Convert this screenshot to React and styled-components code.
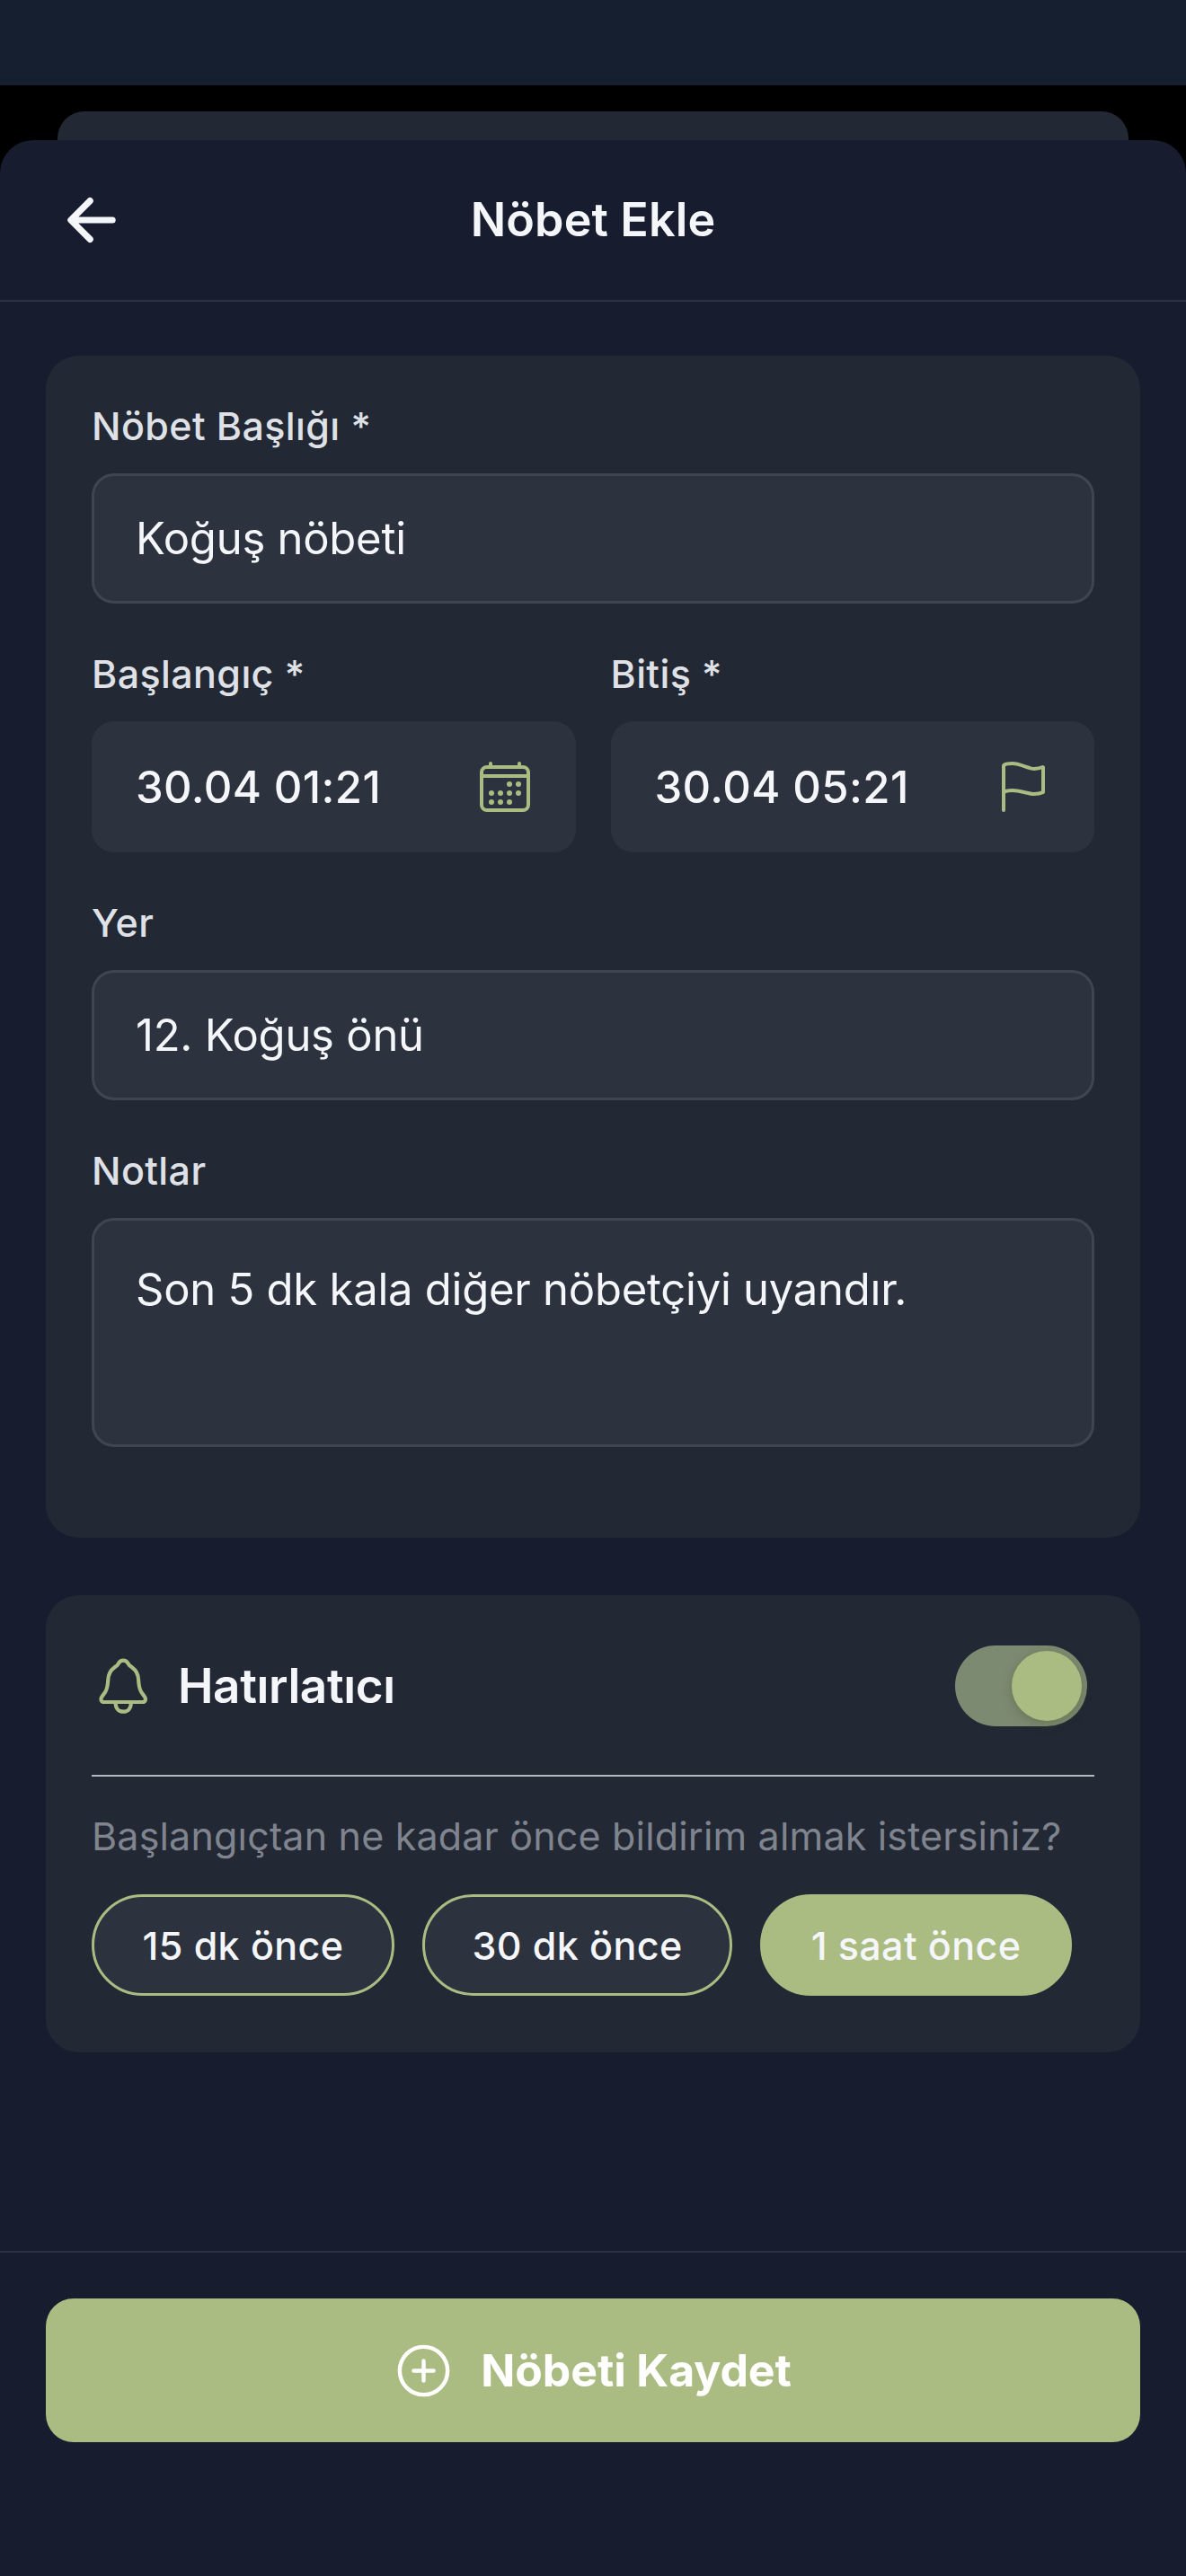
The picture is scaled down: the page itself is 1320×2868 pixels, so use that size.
import { useState } from "react";
import {
  IoAddCircleOutline,
  IoArrowBack,
  IoCalendarOutline,
  IoFlagOutline,
} from "react-icons/io5";
import styled, { createGlobalStyle, css } from "styled-components";

const GlobalStyles = createGlobalStyle`
  :root {
    --color-bg: #171d2e;
    --color-status: #161f30;
    --color-card: #222834;
    --color-field: #2c323e;
    --color-border: #404651;
    --color-line: #2c3243;
    --color-accent: #aabc82;
    --color-text: #f5f6fa;
    --color-label: #dfe1e6;
    --color-muted: #7f848e;

    --radius-card: 37px;
    --radius-field: 25px;
  }

  * {
    box-sizing: border-box;
    margin: 0;
    padding: 0;
  }

  body {
    background-color: #000;
    color: var(--color-text);
    font-family: Inter, "Liberation Sans", sans-serif;
  }

  button,
  input,
  textarea {
    font: inherit;
    color: inherit;
    border: none;
    background: none;
    outline: none;
  }
`;

const Screen = styled.div`
  width: 1320px;
  height: 2868px;
  display: flex;
  flex-direction: column;
  overflow: hidden;
  background-color: #000;
`;

const StatusBar = styled.div`
  height: 95px;
  flex-shrink: 0;
  background-color: var(--color-status);
`;

const PreviousSheet = styled.div`
  height: 32px;
  flex-shrink: 0;
  margin: 29px 64px 0;
  border-radius: 30px 30px 0 0;
  background-color: var(--color-card);
`;

const Sheet = styled.main`
  flex: 1;
  display: flex;
  flex-direction: column;
  border-radius: 37px 37px 0 0;
  background-color: var(--color-bg);
`;

const Header = styled.header`
  height: 180px;
  display: grid;
  grid-template-columns: 76px 1fr 76px;
  align-items: center;
  padding: 0 64px;
  border-bottom: 2px solid var(--color-line);
`;

const BackButton = styled.button`
  display: flex;
  font-size: 76px;
`;

const Title = styled.h1`
  font-size: 52px;
  font-weight: 600;
  line-height: 64px;
  text-align: center;
  letter-spacing: 0.15px;
`;

const Content = styled.div`
  flex: 1;
  display: flex;
  flex-direction: column;
  gap: 64px;
  padding: 60px 51px 0;
`;

const Card = styled.section`
  padding: 51px;
  border-radius: var(--radius-card);
  background-color: var(--color-card);
`;

const FormCard = styled(Card)`
  height: 1316px;
  display: flex;
  flex-direction: column;
  gap: 51px;
`;

const Field = styled.label`
  flex: 1;
  display: flex;
  flex-direction: column;
`;

const StackedField = styled(Field)`
  flex: none;
`;

const FieldRow = styled.div`
  display: flex;
  gap: 39px;
`;

const Label = styled.span`
  height: 80px;
  font-size: 43px;
  font-weight: 500;
  line-height: 54px;
  letter-spacing: 0.4px;
  color: var(--color-label);
`;

const fieldBox = css`
  width: 100%;
  border-radius: var(--radius-field);
  background-color: var(--color-field);
  font-size: 49px;
  letter-spacing: -0.25px;
`;

const Input = styled.input`
  ${fieldBox}
  height: 145px;
  padding: 0 46px;
  border: 3px solid var(--color-border);
`;

const TextArea = styled.textarea`
  ${fieldBox}
  height: 255px;
  padding: 46px;
  border: 3px solid var(--color-border);
  line-height: 62px;
  resize: none;
`;

const DateButton = styled.span`
  ${fieldBox}
  height: 146px;
  display: flex;
  align-items: center;
  justify-content: space-between;
  padding: 0 47px 0 49px;
  font-weight: 500;
  letter-spacing: 0.4px;

  & svg {
    font-size: 64px;
    color: var(--color-accent);
  }
`;

const ReminderCard = styled(Card)`
  height: 509px;
  display: flex;
  flex-direction: column;
`;

const ReminderHeader = styled.div`
  height: 151px;
  display: flex;
  align-items: flex-start;
  padding: 5px 8px 0 0;
  border-bottom: 2px solid #b3b9c1;
`;

const ReminderTitle = styled.h2`
  flex: 1;
  display: flex;
  align-items: center;
  gap: 26px;
  height: 90px;
  font-size: 53px;
  font-weight: 600;
  letter-spacing: -0.4px;
`;

const Switch = styled.button`
  width: 147px;
  height: 90px;
  display: flex;
  align-items: center;
  justify-content: ${({ $on }) => ($on ? "flex-end" : "flex-start")};
  padding: 6px;
  border-radius: 45px;
  background-color: #7d8a72;
`;

const SwitchThumb = styled.span`
  width: 78px;
  height: 78px;
  border-radius: 50%;
  background-color: var(--color-accent);
  box-shadow: 0 3px 12px rgba(60, 80, 30, 0.35);
`;

const Hint = styled.p`
  margin-top: 39px;
  font-size: 43px;
  line-height: 54px;
  letter-spacing: 0.18px;
  color: var(--color-muted);
  white-space: nowrap;
`;

const Chips = styled.div`
  display: flex;
  gap: 31px;
  margin-top: 38px;
`;

const Chip = styled.button`
  width: ${({ $width }) => $width}px;
  height: 113px;
  border: 3px solid var(--color-accent);
  border-radius: 57px;
  background-color: ${({ $active }) =>
    $active ? "var(--color-accent)" : "var(--color-field)"};
  font-size: 43px;
  font-weight: 500;
  letter-spacing: 0.4px;
  white-space: nowrap;
`;

const Footer = styled.footer`
  height: 362px;
  padding: 51px 51px 0;
  border-top: 2px solid var(--color-line);
`;

const SaveButton = styled.button`
  width: 100%;
  height: 160px;
  display: flex;
  align-items: center;
  justify-content: center;
  gap: 28px;
  padding-right: 3px;
  border-radius: 31px;
  background-color: var(--color-accent);
  color: #fff;
  font-size: 50px;
  font-weight: 700;
  letter-spacing: -0.1px;

  & svg {
    font-size: 71px;
  }
`;

const StyledBell = styled.svg`
  width: 70px;
  height: 70px;
  fill: none;
  stroke: var(--color-accent);
  stroke-width: 4.2;
  stroke-linecap: round;
  stroke-linejoin: round;
`;

function BellIcon() {
  return (
    <StyledBell viewBox="0 0 70 70">
      <path d="M35.2 6.7C32 6.700 30.300 9 29.200 11C28.300 12.700 27 13.200 25.300 14.500C20.500 18 18.600 22.500 18.300 28C18 34 17.700 38 15 42L11.300 47.200C9.500 50.200 10.600 53 13.600 53H56.800C59.800 53 60.900 50.200 59.100 47.200L55.400 42C52.700 38 52.400 34 52.100 28C51.800 22.500 49.900 18 45.100 14.500C43.400 13.200 42.100 12.700 41.200 11C40.100 9 38.400 6.700 35.200 6.700Z" />
      <path d="M26.600 54C26.600 59.800 30 63.700 35.200 63.700C40.400 63.700 43.800 59.800 43.800 54" />
    </StyledBell>
  );
}

const reminders = [
  { id: "15m", label: "15 dk önce", width: 337 },
  { id: "30m", label: "30 dk önce", width: 345 },
  { id: "1h", label: "1 saat önce", width: 347 },
];

export default function App() {
  const [reminderOn, setReminderOn] = useState(true);
  const [selected, setSelected] = useState("1h");

  return (
    <>
      <GlobalStyles />
      <Screen>
        <StatusBar />
        <PreviousSheet />
        <Sheet>
          <Header>
            <BackButton type="button">
              <IoArrowBack />
            </BackButton>
            <Title>Nöbet Ekle</Title>
          </Header>

          <Content>
            <FormCard>
              <StackedField>
                <Label>Nöbet Başlığı *</Label>
                <Input defaultValue="Koğuş nöbeti" />
              </StackedField>
              <FieldRow>
                <Field>
                  <Label>Başlangıç *</Label>
                  <DateButton>
                    30.04 01:21
                    <IoCalendarOutline />
                  </DateButton>
                </Field>
                <Field>
                  <Label>Bitiş *</Label>
                  <DateButton>
                    30.04 05:21
                    <IoFlagOutline />
                  </DateButton>
                </Field>
              </FieldRow>
              <StackedField>
                <Label>Yer</Label>
                <Input defaultValue="12. Koğuş önü" />
              </StackedField>
              <StackedField>
                <Label>Notlar</Label>
                <TextArea
                  spellCheck={false}
                  defaultValue="Son 5 dk kala diğer nöbetçiyi uyandır."
                />
              </StackedField>
            </FormCard>

            <ReminderCard>
              <ReminderHeader>
                <ReminderTitle>
                  <BellIcon />
                  Hatırlatıcı
                </ReminderTitle>
                <Switch
                  type="button"
                  $on={reminderOn}
                  onClick={() => setReminderOn((on) => !on)}
                >
                  <SwitchThumb />
                </Switch>
              </ReminderHeader>
              <Hint>Başlangıçtan ne kadar önce bildirim almak istersiniz?</Hint>
              <Chips>
                {reminders.map(({ id, label, width }) => (
                  <Chip
                    type="button"
                    key={id}
                    $width={width}
                    $active={selected === id}
                    onClick={() => setSelected(id)}
                  >
                    {label}
                  </Chip>
                ))}
              </Chips>
            </ReminderCard>
          </Content>

          <Footer>
            <SaveButton type="button">
              <IoAddCircleOutline />
              Nöbeti Kaydet
            </SaveButton>
          </Footer>
        </Sheet>
      </Screen>
    </>
  );
}
